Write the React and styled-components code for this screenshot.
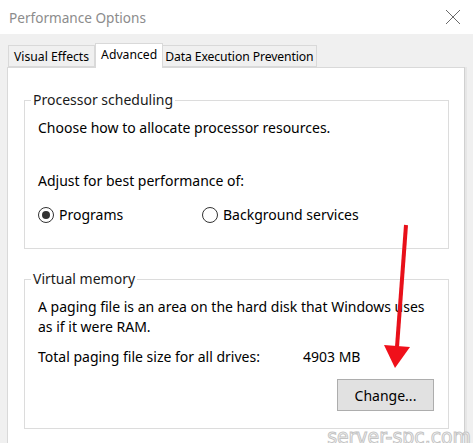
import React from 'react'
import styled, { createGlobalStyle } from 'styled-components'

const GlobalStyle = createGlobalStyle`
    html, body {
        margin:0;
        padding:0;
        background:#f0f0f0;
    }
    body{
        font-family:"Noto Sans", "Open Sans", Arial, sans-serif;
        color:#000;
    }
`;

const App = () => {
    return (
        <Window>
            <GlobalStyle />
            <TitleBar>
                <Title>Performance Options</Title>
                <CloseButton>
                    <svg width="16" height="16" viewBox="0 0 16 16">
                        <path d="M1 1 L15 15 M15 1 L1 15" stroke="#6a6a6a" strokeWidth="1" fill="none" />
                    </svg>
                </CloseButton>
            </TitleBar>
            <Body>
                <TabRow>
                    <Tab>Visual Effects</Tab>
                    <Tab active>Advanced</Tab>
                    <Tab tight>Data Execution Prevention</Tab>
                </TabRow>
                <Panel>
                    <GroupBox>
                        <Legend>Processor scheduling</Legend>
                        <Line>Choose how to allocate processor resources.</Line>
                        <Line gap={31}>Adjust for best performance of:</Line>
                        <RadioRow>
                            <RadioLabel width={164}>
                                <Radio checked />Programs
                            </RadioLabel>
                            <RadioLabel>
                                <Radio />Background services
                            </RadioLabel>
                        </RadioRow>
                    </GroupBox>
                    <GroupBox second>
                        <Legend>Virtual memory</Legend>
                        <Line tight>A paging file is an area on the hard disk that Windows uses</Line>
                        <Line tight>as if it were RAM.</Line>
                        <SizeRow>
                            <span>Total paging file size for all drives:</span>
                            <span>4903 MB</span>
                        </SizeRow>
                        <ButtonRow>
                            <Button>Change...</Button>
                        </ButtonRow>
                    </GroupBox>
                </Panel>
            </Body>
            <Arrow width="40" height="160" viewBox="0 0 40 160">
                <path d="M23 2 L14 124" stroke="#e8101a" strokeWidth="4" fill="none" />
                <path d="M1 122 L27 124 L12 145 Z" fill="#f0101a" />
            </Arrow>
            <Watermark>server-spc.com</Watermark>
        </Window>
    )
}

const Window = styled.div`
    position:relative;
    width:473px;
    height:443px;
    overflow:hidden;
    background:#f0f0f0;
`;
const TitleBar = styled.div`
    height:34px;
    background:#fff;
    display:flex;
    align-items:center;
    justify-content:space-between;
    padding:0 12px 0 9px;
`;
const Title = styled.span`
    font-size:13.6px;
    color:#8c8c8c;
`;
const CloseButton = styled.span`
    display:flex;
    align-items:center;
`;
const Body = styled.div`
    padding:9px 8px 0 7px;
`;
const TabRow = styled.div`
    display:flex;
    align-items:flex-end;
    height:24px;
    padding-left:1px;
    position:relative;
    z-index:1;
`;
const Tab = styled.div`
    box-sizing:border-box;
    height:${p => p.active ? '25px' : '22px'};
    margin-bottom:${p => p.active ? '-1px' : '0'};
    padding:${p => p.active ? '0 5px 3px' : p.tight ? '0 2px' : '0 5px'};
    display:flex;
    align-items:center;
    font-size:12.2px;
    letter-spacing:${p => p.tight ? '-0.1px' : '0'};
    background:${p => p.active ? '#fff' : '#f0f0f0'};
    border:1px solid #d9d9d9;
    border-bottom:${p => p.active ? 'none' : '1px solid #d9d9d9'};
    margin-left:${p => p.active ? '0' : '-1px'};
    &:first-child{ margin-left:0; }
`;
const Panel = styled.div`
    background:#fff;
    border:1px solid #d9d9d9;
    border-right:1px solid #d0d0d0;
    height:400px;
    padding:23px 15px 0 16px;
    box-shadow:2px 0 0 #e6e6e6;
`;
const GroupBox = styled.fieldset`
    margin:${p => p.second ? '21px 0 0' : '0'};
    border:1px solid #dcdcdc;
    padding:${p => p.second ? '9px 14px 17px 13px' : '8px 14px 22px 13px'};
    min-width:0;
`;
const Legend = styled.legend`
    font-size:14px;
    line-height:18px;
    margin-left:-7px;
    padding:0 2px;
    color:#1a1a1a;
`;
const Line = styled.div`
    font-size:14px;
    line-height:${p => p.tight ? '20px' : '22px'};
    margin-top:${p => p.gap ? `${p.gap}px` : '0'};
`;
const RadioRow = styled.div`
    display:flex;
    align-items:center;
    margin-top:12px;
    font-size:14px;
    line-height:22px;
`;
const RadioLabel = styled.label`
    display:flex;
    align-items:center;
    width:${p => p.width ? `${p.width}px` : 'auto'};
`;
const Radio = styled.span`
    box-sizing:border-box;
    width:16px;
    height:16px;
    border-radius:50%;
    border:1px solid #333;
    margin-right:5px;
    display:flex;
    align-items:center;
    justify-content:center;
    &::after{
        content:'';
        width:8px;
        height:8px;
        border-radius:50%;
        background:${p => p.checked ? '#333' : 'transparent'};
    }
`;
const SizeRow = styled.div`
    display:grid;
    grid-template-columns:265px auto;
    font-size:14px;
    line-height:22px;
    margin-top:9px;
`;
const ButtonRow = styled.div`
    display:flex;
    justify-content:flex-end;
    margin-top:11px;
`;
const Button = styled.button`
    width:97px;
    height:32px;
    background:#e1e1e1;
    border:1px solid #adadad;
    font-family:inherit;
    font-size:14px;
    color:#000;
    padding:0;
`;
const Arrow = styled.svg`
    position:absolute;
    left:383px;
    top:223px;
`;
const Watermark = styled.div`
    position:absolute;
    right:2px;
    top:425px;
    font-size:21px;
    font-stretch:condensed;
    letter-spacing:0;
    color:#fff;
    -webkit-text-stroke:1px #c4c4c4;
    font-family:"DejaVu Sans Condensed", "DejaVu Sans", sans-serif;
`;

export default App
